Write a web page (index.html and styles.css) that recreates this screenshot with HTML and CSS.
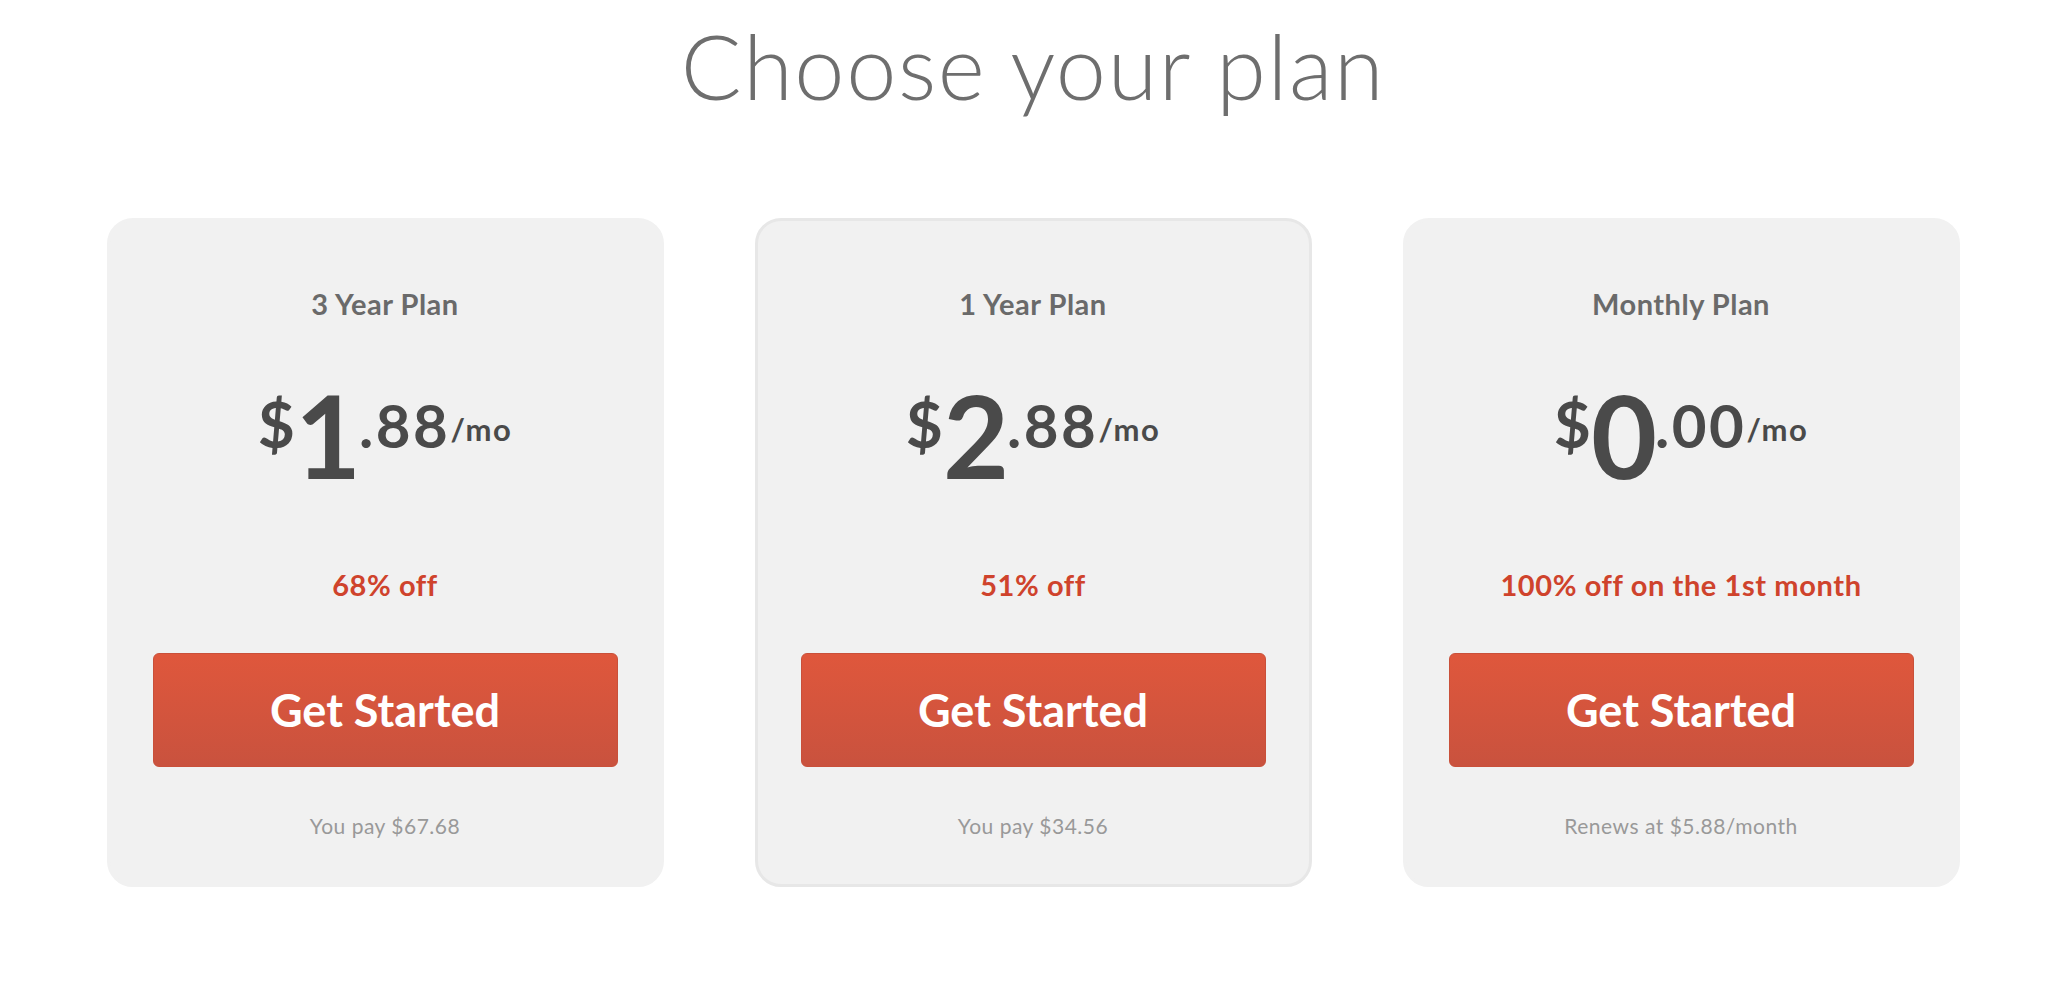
FILE: index.html
```html
<!DOCTYPE html>
<html lang="en">
<head>
<meta charset="utf-8">
<title>Choose your plan</title>
<link rel="stylesheet" href="styles.css">
</head>
<body>
<main class="page">
  <h1 class="page-title">Choose your plan</h1>
  <section class="plans">
    <article class="plan">
      <h2 class="plan-name">3 Year Plan</h2>
      <div class="price"><span class="cur">$</span><span class="int">1</span><span class="dec">.88</span><span class="per">/mo</span></div>
      <p class="discount">68% off</p>
      <a class="cta" href="#">Get Started</a>
      <p class="note">You pay $67.68</p>
    </article>
    <article class="plan plan-featured">
      <h2 class="plan-name">1 Year Plan</h2>
      <div class="price"><span class="cur">$</span><span class="int">2</span><span class="dec">.88</span><span class="per">/mo</span></div>
      <p class="discount">51% off</p>
      <a class="cta" href="#">Get Started</a>
      <p class="note">You pay $34.56</p>
    </article>
    <article class="plan">
      <h2 class="plan-name">Monthly Plan</h2>
      <div class="price"><span class="cur">$</span><span class="int">0</span><span class="dec">.00</span><span class="per">/mo</span></div>
      <p class="discount">100% off on the 1st month</p>
      <a class="cta" href="#">Get Started</a>
      <p class="note">Renews at $5.88/month</p>
    </article>
  </section>
</main>
</body>
</html>
```

FILE: styles.css
```css
* { box-sizing: border-box; }

html, body {
  margin: 0;
  padding: 0;
  background: #ffffff;
}

body {
  font-family: Lato, "Open Sans", "Liberation Sans", sans-serif;
  color: #4a4a4a;
}

.page {
  width: 2066px;
  display: flex;
  flex-direction: column;
  align-items: center;
  padding-top: 11px;
}

.page-title {
  margin: 0;
  font-size: 90px;
  font-weight: 300;
  line-height: 1.2;
  color: #6e6e6e;
  letter-spacing: 1.6px;
}

.plans {
  margin-top: 99px;
  display: grid;
  grid-template-columns: repeat(3, 557px);
  column-gap: 91px;
}

.plan {
  background: #f1f1f1;
  border: 3px solid #f1f1f1;
  border-radius: 26px;
  padding: 66px 43px 46px;
  display: flex;
  flex-direction: column;
  align-items: center;
  text-align: center;
}

.plan-featured {
  border-color: #e7e7e7;
}

.plan-name {
  margin: 0;
  font-size: 29px;
  font-weight: 700;
  line-height: 1.2;
  color: #6a6a6a;
  letter-spacing: 0.5px;
}

.price {
  margin-top: 56px;
  font-size: 114px;
  line-height: 114px;
  font-weight: 700;
  color: #4a4a4a;
  white-space: nowrap;
}

.price span {
  line-height: 1;
}

.cur {
  font-size: 64px;
  vertical-align: 31px;
}

.int {
  font-size: 114px;
  letter-spacing: -2px;
}

.dec {
  font-size: 60px;
  vertical-align: 31px;
  letter-spacing: 2.5px;
}

.per {
  font-size: 31px;
  vertical-align: 38px;
  letter-spacing: 1.5px;
}

.discount {
  margin: 76px 0 0;
  font-size: 29px;
  font-weight: 700;
  line-height: 1.2;
  color: #cf432c;
  letter-spacing: 0.6px;
}

.cta {
  margin-top: 50px;
  align-self: stretch;
  height: 114px;
  display: flex;
  align-items: center;
  justify-content: center;
  border-radius: 6px;
  border: 1px solid #c9503a;
  background: linear-gradient(#df573c, #c9523e);
  color: #ffffff;
  font-size: 45px;
  font-weight: 700;
  text-decoration: none;
  line-height: 1.2;
}

.note {
  margin: 46px 0 0;
  font-size: 21px;
  font-weight: 400;
  line-height: 1.2;
  color: #999999;
  letter-spacing: 0.5px;
}
```
